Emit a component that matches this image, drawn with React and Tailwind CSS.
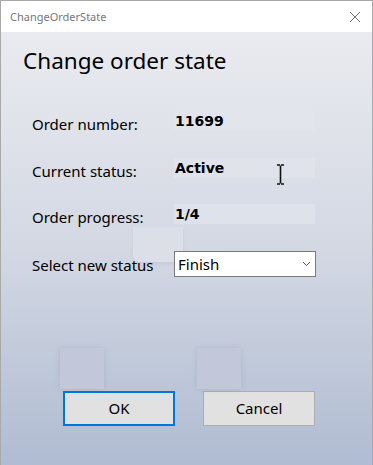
import React from "react";

const sans = { fontFamily: '"Noto Sans", "Open Sans", sans-serif' };

function Row({ label, value, className = "" }) {
  return (
    <div className={`flex items-start h-[20px] ${className}`}>
      <div className="w-[173px] h-[20px] shrink-0 pl-[31px] pt-[3px] text-[15px] leading-[20px] text-black whitespace-nowrap" style={sans}>
        {label}
      </div>
      <div
        className="w-[141px] h-[20px] shrink-0 bg-[#e3e6ed]/60 pl-[1px] pt-[2px] text-[14px] leading-[16px] font-bold text-black"
        style={{ fontFamily: '"DejaVu Sans", Verdana, sans-serif' }}
      >
        {value}
      </div>
    </div>
  );
}

export default function App() {
  return (
    <div className="w-[373px] h-[465px] overflow-hidden">
      <div className="relative w-[373px] h-[466px] border border-[#a9a9a9] flex flex-col">
        <div className="h-[31px] bg-white flex items-center justify-between pl-[9px] pr-[10px] shrink-0">
          <span className="text-[11px] text-[#777] leading-none" style={sans}>
            ChangeOrderState
          </span>
          <svg width="12" height="12" viewBox="0 0 12 12" className="mr-[1px]">
            <path d="M1 1 L11 11 M11 1 L1 11" stroke="#6f6f6f" strokeWidth="1" fill="none" />
          </svg>
        </div>
        <div className="flex-1 bg-gradient-to-b from-[#eaebf0] via-[#d3d8e3] to-[#b0bcd2] flex flex-col">
          <div className="pl-[22px] pt-[14px] h-[79px] text-[22.5px] leading-[30px] text-black" style={sans}>
            Change order state
          </div>
          <Row label="Order number:" value="11699" />
          <Row label="Current status:" value="Active" className="mt-[27px]" />
          <Row label="Order progress:" value="1/4" className="mt-[26px]" />
          <div className="flex items-center h-[26px] mt-[27px]">
            <div className="relative z-10 w-[173px] shrink-0 pl-[31px] pt-[1px] text-[15px] leading-[20px] text-black whitespace-nowrap" style={sans}>
              Select new status
            </div>
            <div className="relative z-10 w-[142px] h-[26px] shrink-0 bg-white border border-[#7a7a7a] flex items-center justify-between pl-[3px] pr-[4px]">
              <span className="text-[15px] leading-none text-black" style={sans}>Finish</span>
              <svg width="9" height="6" viewBox="0 0 9 6">
                <path d="M1 1 L4.5 4.5 L8 1" stroke="#555" strokeWidth="1" fill="none" />
              </svg>
            </div>
          </div>
          <div className="flex mt-[114px] pl-[62px] gap-[28px]">
            <button className="w-[112px] h-[35px] bg-[#e1e1e1] border-2 border-[#0078d7] text-[15px] text-black leading-none" style={sans}>
              OK
            </button>
            <button className="w-[112px] h-[35px] bg-[#e1e1e1] border border-[#adadad] text-[15px] text-black leading-none" style={sans}>
              Cancel
            </button>
          </div>
        </div>

        <div className="absolute left-[132px] top-[226px] w-[50px] h-[35px] bg-[#dcdfe7] rounded-bl-[6px] shadow-[0_2px_3px_rgba(120,130,160,0.12)]" />
        <div className="absolute left-[59px] top-[347px] w-[44px] h-[41px] bg-[#c2c8da] shadow-[0_0_5px_rgba(120,130,160,0.25)]" />
        <div className="absolute left-[196px] top-[347px] w-[44px] h-[41px] bg-[#c2c8da] shadow-[0_0_5px_rgba(120,130,160,0.25)]" />

        <svg className="absolute left-[275px] top-[163px]" width="9" height="21" viewBox="0 0 9 21">
          <path d="M1 1 H4 M5 1 H8 M4.5 1.5 V19.5 M1 20 H4 M5 20 H8" stroke="#111" strokeWidth="1.6" fill="none" />
        </svg>
      </div>
    </div>
  );
}
